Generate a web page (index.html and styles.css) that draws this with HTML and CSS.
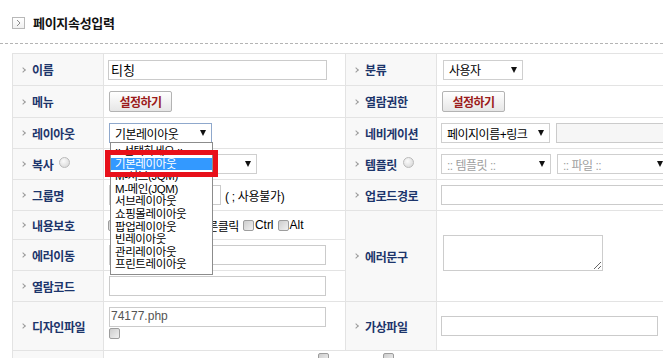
FILE: index.html
```html
<!DOCTYPE html>
<html lang="ko">
<head>
    <meta charset="UTF-8">
    <title>페이지속성입력</title>
    <link rel="stylesheet" href="styles.css">
</head>
<body>
    <div class="head">
        <span class="head-icon">
            <svg width="11" height="10" viewBox="0 0 11 10"><polyline points="4,2 7,5 4,8" fill="none" stroke="#8a8a8a" stroke-width="1"/></svg>
        </span>
        <h1 class="title">페이지속성입력</h1>
    </div>
    <div class="divider"></div>

    <div class="form">
        <!-- row 1 -->
        <div class="lbl">이름</div>
        <div class="val"><input class="inp w219" type="text" value="티칭"></div>
        <div class="lbl">분류</div>
        <div class="val"><span class="sel w80 ml2"><span>사용자</span><i class="tri"></i></span></div>

        <!-- row 2 -->
        <div class="lbl">메뉴</div>
        <div class="val"><button class="btn">설정하기</button></div>
        <div class="lbl">열람권한</div>
        <div class="val"><button class="btn">설정하기</button></div>

        <!-- row 3 -->
        <div class="lbl">레이아웃</div>
        <div class="val layout">
            <span class="sel sel-focus w103 ml1"><span>기본레이아웃</span><i class="tri"></i></span>
            <ul class="droplist">
                <li>:: 선택하세요 ::</li>
                <li class="on">기본레이아웃</li>
                <li>M-서브(JQM)</li>
                <li>M-메인(JQM)</li>
                <li>서브레이아웃</li>
                <li>쇼핑몰레이아웃</li>
                <li>팝업레이아웃</li>
                <li>빈레이아웃</li>
                <li>관리레이아웃</li>
                <li>프린트레이아웃</li>
            </ul>
            <span class="mark"></span>
        </div>
        <div class="lbl">네비게이션</div>
        <div class="val">
            <span class="sel w110"><span>페이지이름+링크</span><i class="tri"></i></span>
            <input class="inp inp-off w120 ml6" type="text">
        </div>

        <!-- row 4 -->
        <div class="lbl">복사<span class="radio"></span></div>
        <div class="val"><span class="sel w148 ml1"><span></span><i class="tri"></i></span></div>
        <div class="lbl">템플릿<span class="radio"></span></div>
        <div class="val">
            <span class="sel sel-empty w110"><span>:: 템플릿 ::</span><i class="tri"></i></span>
            <span class="sel sel-empty w112 ml6"><span>:: 파일 ::</span><i class="tri"></i></span>
        </div>

        <!-- row 5 -->
        <div class="lbl">그룹명</div>
        <div class="val">
            <input class="inp w112 ml1" type="text">
            <span class="note">( ; 사용불가)</span>
        </div>
        <div class="lbl">업로드경로</div>
        <div class="val"><input class="inp w230" type="text"></div>

        <!-- row 6 -->
        <div class="lbl">내용보호</div>
        <div class="val opts">
            <span class="chk"></span><span>드래그방지</span>
            <span class="chk gap"></span><span>오른클릭</span>
            <span class="chk"></span><span class="en">Ctrl</span>
            <span class="chk"></span><span class="en">Alt</span>
        </div>
        <div class="lbl tall">에러문구</div>
        <div class="val tall"><textarea class="area"></textarea></div>

        <!-- row 7 -->
        <div class="lbl">에러이동</div>
        <div class="val"><input class="inp w217 ml1" type="text"></div>

        <!-- row 8 -->
        <div class="lbl">열람코드</div>
        <div class="val"><input class="inp w217 ml1" type="text"></div>

        <!-- row 9 -->
        <div class="lbl">디자인파일</div>
        <div class="val stack">
            <input class="inp inp-file w217 ml1" type="text" value="74177.php">
            <span class="chk ml1"></span>
        </div>
        <div class="lbl">가상파일</div>
        <div class="val"><input class="inp w217" type="text"></div>

        <!-- row 10 -->
        <div class="lbl"></div>
        <div class="val wide">
            <span class="chk chk-a"></span>
            <span class="chk chk-b"></span>
        </div>
    </div>
</body>
</html>
```

FILE: styles.css
```css
* {
    box-sizing: border-box;
    margin: 0;
    padding: 0;
}

html, body {
    overflow: hidden;
}

body {
    width: 663px;
    height: 358px;
    background: #fff;
    color: #000;
    font-family: "Liberation Sans", "Noto Sans CJK KR", sans-serif;
    font-size: 12px;
}

.head {
    height: 43px;
    display: flex;
    align-items: center;
    gap: 8px;
    padding: 2px 0 0 12px;
}

.head-icon {
    width: 13px;
    height: 12px;
    border: 1px solid #b8b8b8;
    background: linear-gradient(#fff, #f0f0f0);
    display: flex;
    align-items: center;
    justify-content: center;
}

.title {
    font-family: "Noto Sans CJK KR", sans-serif;
    font-size: 13px;
    font-weight: bold;
    letter-spacing: -0.3px;
    color: #111;
}

.divider {
    border-top: 1px dashed #b4b4b4;
}

/* form grid */
.form {
    display: grid;
    grid-template-columns: 91px 242px 91px 240px;
    grid-template-rows: 32px 32px 31px 31px 31px 29px 31px 31px 49px 31px;
    width: max-content;
    margin: 9px 0 0 12px;
    border-top: 1px solid #e3e3e3;
    border-left: 1px solid #e3e3e3;
}

.lbl, .val {
    border-right: 1px solid #e3e3e3;
    border-bottom: 1px solid #e3e3e3;
    display: flex;
    align-items: center;
}

.lbl {
    background: #f8f8f8;
    padding-left: 8px;
    font-family: "Noto Sans CJK KR", sans-serif;
    font-size: 12px;
    font-weight: bold;
    letter-spacing: -0.4px;
    color: #1d356b;
}

.lbl::before {
    content: "";
    width: 3px;
    height: 3px;
    border-top: 1px solid #9a9a9a;
    border-right: 1px solid #9a9a9a;
    transform: rotate(45deg);
    margin-right: 7px;
}

.val {
    padding-left: 4px;
    background: #fff;
}

.tall { grid-row: span 3; }
.wide { grid-column: span 3; align-items: flex-start; }

/* controls */
.inp {
    height: 20px;
    border: 1px solid #cbcbcb;
    padding: 0 2px;
    font-family: "Noto Sans CJK KR", sans-serif;
    font-size: 13px;
    color: #000;
    background: #fff;
    outline: none;
}

.inp-off { background: #f6f6f6; }

.inp-file {
    font-family: "Liberation Sans", sans-serif;
    font-size: 12px;
    color: #555;
    padding: 0 1px 3px;
}

.btn {
    width: 63px;
    height: 21px;
    border: 1px solid #b3b3b3;
    border-radius: 2px;
    background: linear-gradient(#fff, #e6e6e6);
    font-family: "Noto Sans CJK KR", sans-serif;
    font-size: 12px;
    font-weight: bold;
    letter-spacing: -0.5px;
    color: #9b1b1b;
    margin-left: 1px;
}

.sel {
    display: flex;
    align-items: center;
    justify-content: space-between;
    height: 20px;
    border: 1px solid #cfcfcf;
    background: #fff;
    padding: 0 5px 0 5px;
    font-family: "Liberation Sans", "Noto Sans CJK KR", sans-serif;
    font-size: 12px;
    letter-spacing: -0.5px;
    white-space: nowrap;
}

.sel-focus { border-color: #8fa8cc; }
.sel-empty { color: #a0a0a0; }

.tri {
    width: 0;
    height: 0;
    border-left: 3.5px solid transparent;
    border-right: 3.5px solid transparent;
    border-top: 6px solid #111;
}

.w80 { width: 80px; }
.w103 { width: 103px; }
.w110 { width: 110px; }
.w112 { width: 112px; }
.w120 { width: 120px; }
.w148 { width: 148px; }
.w217 { width: 217px; }
.w219 { width: 219px; }
.w230 { width: 230px; }
.ml1 { margin-left: 1px; }
.ml2 { margin-left: 2px; }
.ml6 { margin-left: 6px; }

.note {
    margin-left: 4px;
    letter-spacing: -0.3px;
}

.radio {
    width: 11px;
    height: 11px;
    border: 1px solid #bababa;
    border-radius: 50%;
    background: radial-gradient(circle at 40% 35%, #fbfbfb, #d3d3d3);
    margin: -4px 0 0 6px;
}

.chk {
    width: 11px;
    height: 11px;
    border: 1px solid #9d9d9d;
    border-radius: 2px;
    background: linear-gradient(135deg, #cdcdcd, #f1f1f1);
    margin: 0 1px 0 4px;
    flex: none;
}

.opts { padding-left: 4px; letter-spacing: -0.5px; }
.opts .chk:first-child { margin-left: 0; }
.opts .chk.gap { margin-left: 12px; }
.opts .en { letter-spacing: 0; }

.stack {
    flex-direction: column;
    align-items: flex-start;
    padding-top: 5px;
}

.stack .chk { margin: 1px 0 0 1px; }

.area {
    width: 160px;
    height: 36px;
    border: 1px solid #cdcdcd;
    margin: 0 0 7px 2px;
    resize: both;
}

.chk-a { margin: 2px 0 0 210px; }
.chk-b { margin: 2px 0 0 54px; }

/* open dropdown of the layout select */
.layout { position: relative; }

.droplist {
    position: absolute;
    left: 6px;
    top: 24px;
    width: 103px;
    border: 1px solid #8c8c8c;
    background: #fff;
    padding: 2px 0 3px;
    list-style: none;
    z-index: 2;
}

.droplist li {
    height: 12.6px;
    line-height: 12.6px;
    padding-left: 4px;
    font-size: 11.5px;
    letter-spacing: -0.4px;
    white-space: nowrap;
}

.droplist li.on {
    background: #3399ff;
    color: #fff;
}

.mark {
    position: absolute;
    left: 1px;
    top: 32px;
    width: 113px;
    height: 27px;
    border: 5px solid #e8101a;
    z-index: 3;
}
```
